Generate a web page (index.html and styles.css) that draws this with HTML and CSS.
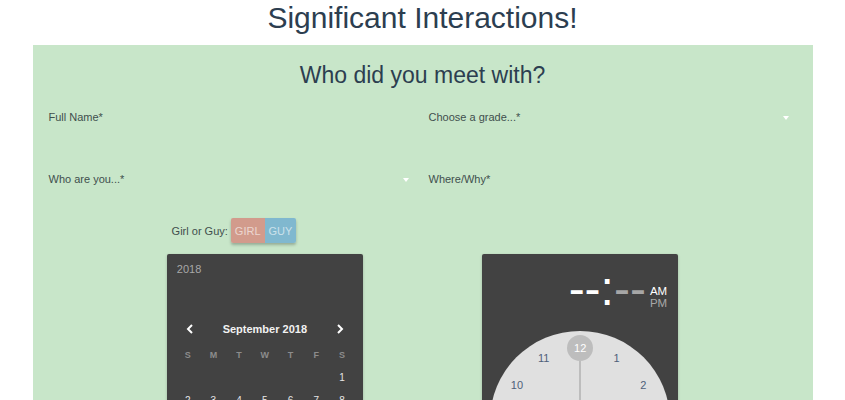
FILE: index.html
```html
<!DOCTYPE html>
<html>
<head>
<meta charset="utf-8">
<link rel="stylesheet" href="styles.css">
</head>
<body>
<div class="page">
  <h1 class="title">Significant Interactions!</h1>
  <div class="panel">
    <h2 class="subtitle">Who did you meet with?</h2>
    <div class="fields">
      <div class="field"><span class="label">Full Name*</span></div>
      <div class="field"><span class="label">Choose a grade...*</span><span class="arrow"></span></div>
      <div class="field"><span class="label">Who are you...*</span><span class="arrow"></span></div>
      <div class="field"><span class="label">Where/Why*</span></div>
    </div>
    <div class="gender-row">
      <div class="gender">
        <span class="gender-label">Girl or Guy:</span>
        <div class="toggle"><span class="btn girl">GIRL</span><span class="btn guy">GUY</span></div>
      </div>
    </div>
    <div class="pickers">
      <div class="card date">
        <div class="date-header"><span class="year">2018</span></div>
        <div class="date-body">
          <div class="nav">
            <svg class="chev" width="8" height="10" viewBox="0 0 8 10"><polyline points="6,1 2,5 6,9" fill="none" stroke="#fff" stroke-width="2"/></svg>
            <span class="month">September 2018</span>
            <svg class="chev" width="8" height="10" viewBox="0 0 8 10"><polyline points="2,1 6,5 2,9" fill="none" stroke="#fff" stroke-width="2"/></svg>
          </div>
          <div class="grid week">
            <span>S</span><span>M</span><span>T</span><span>W</span><span>T</span><span>F</span><span>S</span>
          </div>
          <div class="grid days">
            <span></span><span></span><span></span><span></span><span></span><span></span><span>1</span>
            <span>2</span><span>3</span><span>4</span><span>5</span><span>6</span><span>7</span><span>8</span>
            <span>9</span><span>10</span><span>11</span><span>12</span><span>13</span><span>14</span><span>15</span>
            <span>16</span><span>17</span><span>18</span><span>19</span><span>20</span><span>21</span><span>22</span>
            <span>23</span><span>24</span><span>25</span><span>26</span><span>27</span><span>28</span><span>29</span>
            <span>30</span>
          </div>
        </div>
      </div>
      <div class="card time">
        <div class="time-header">
          <span class="digits"><span class="on">--</span><span class="on">:</span><span class="off">--</span></span>
          <span class="ampm"><span class="on">AM</span><span class="off">PM</span></span>
        </div>
        <div class="face">
          <span class="hand"></span>
          <span class="num sel" style="left:90px;top:17px">12</span>
          <span class="num" style="left:126.5px;top:26.8px">1</span>
          <span class="num" style="left:153.2px;top:53.5px">2</span>
          <span class="num" style="left:163px;top:90px">3</span>
          <span class="num" style="left:153.2px;top:126.5px">4</span>
          <span class="num" style="left:126.5px;top:153.2px">5</span>
          <span class="num" style="left:90px;top:163px">6</span>
          <span class="num" style="left:53.5px;top:153.2px">7</span>
          <span class="num" style="left:26.8px;top:126.5px">8</span>
          <span class="num" style="left:17px;top:90px">9</span>
          <span class="num" style="left:26.8px;top:53.5px">10</span>
          <span class="num" style="left:53.5px;top:26.8px">11</span>
        </div>
      </div>
    </div>
  </div>
</div>
</body>
</html>
```

FILE: styles.css
```css
* { box-sizing: border-box; }
html, body { margin: 0; padding: 0; background: #fff; }
body { font-family: "Liberation Sans", Arial, sans-serif; color: #2c3e50; }

.page { width: 780px; margin: 0 auto; }

.title {
  margin: 0;
  font-size: 30px;
  font-weight: normal;
  line-height: 36px;
  text-align: center;
  color: #2c3e50;
}

.panel {
  margin-top: 9px;
  background: #c8e6c9;
  padding: 15px 16px 40px;
}

.subtitle {
  margin: 0;
  font-size: 23px;
  font-weight: normal;
  line-height: 30px;
  text-align: center;
  color: #2c3e50;
}

.fields {
  margin-top: 20px;
  display: grid;
  grid-template-columns: 1fr 1fr;
  grid-template-rows: 62px 30px;
  column-gap: 12px;
}

.field {
  display: flex;
  align-items: flex-start;
  justify-content: space-between;
  padding-right: 8px;
}

.label {
  font-size: 11px;
  line-height: 14px;
  color: #3f4f4d;
}

.arrow {
  margin-top: 6px;
  width: 0;
  height: 0;
  border-left: 3.5px solid transparent;
  border-right: 3.5px solid transparent;
  border-top: 4px solid #fff;
}

.gender-row {
  margin-top: 16px;
  display: grid;
  grid-template-columns: 1fr 1fr;
  column-gap: 12px;
}

.gender {
  display: flex;
  align-items: center;
  justify-content: center;
  gap: 3px;
  padding-left: 3px;
}

.gender-label {
  font-size: 11px;
  color: #3f4f4d;
}

.toggle {
  display: flex;
  height: 25px;
  border-radius: 2px;
  overflow: hidden;
  box-shadow: 0 2px 3px rgba(0,0,0,0.25);
}

.btn {
  display: flex;
  align-items: center;
  padding: 0 4px;
  font-size: 11px;
  color: rgba(255,255,255,0.6);
}
.girl { background: #d29b8c; }
.guy { background: #80b8cf; }

.pickers {
  margin-top: 11px;
  display: flex;
  justify-content: space-evenly;
  align-items: flex-start;
}

.card {
  width: 196px;
  background: #424242;
  border-radius: 2px;
  box-shadow: 0 1px 3px rgba(0,0,0,0.2);
}
.card.time { margin-left: 1px; }

.date-header {
  height: 56px;
  padding: 5px 10px 0;
}
.year {
  font-size: 11px;
  line-height: 14px;
  color: #a8a8a8;
}

.date-body { padding: 6px 8px 0; }

.nav {
  height: 26px;
  display: flex;
  align-items: center;
  justify-content: space-between;
  padding: 0 11px;
}
.month {
  font-size: 11px;
  font-weight: bold;
  color: #f2f2f2;
}

.grid {
  display: grid;
  grid-template-columns: repeat(7, 1fr);
  text-align: center;
}
.week {
  margin-top: 2px;
  height: 22px;
  align-items: center;
  font-size: 9px;
  font-weight: bold;
  color: #8c8c8c;
}
.days {
  grid-auto-rows: 23px;
  align-items: center;
  font-size: 10px;
  color: #e6e6e6;
}

.time-header {
  height: 59px;
  padding: 11px 11px 0 0;
  display: flex;
  justify-content: flex-end;
  align-items: flex-start;
}
.digits {
  font-size: 48px;
  line-height: 48px;
}
.ampm {
  margin-top: 20px;
  margin-left: 4px;
  display: flex;
  flex-direction: column;
  font-size: 11.5px;
  line-height: 12px;
}
.on { color: #ffffff; }
.off { color: rgba(255,255,255,0.55); }

.face {
  position: relative;
  width: 180px;
  height: 180px;
  margin: 18px auto 8px;
  border-radius: 50%;
  background: #e0e0e0;
}
.hand {
  position: absolute;
  left: 89px;
  top: 30px;
  width: 2px;
  height: 60px;
  background: #bdbdbd;
}
.num {
  position: absolute;
  width: 26px;
  height: 26px;
  margin: -13px 0 0 -13px;
  display: flex;
  align-items: center;
  justify-content: center;
  font-size: 11px;
  color: #4f5f7a;
  border-radius: 50%;
}
.num.sel {
  background: #bdbdbd;
  color: #fff;
}
```
